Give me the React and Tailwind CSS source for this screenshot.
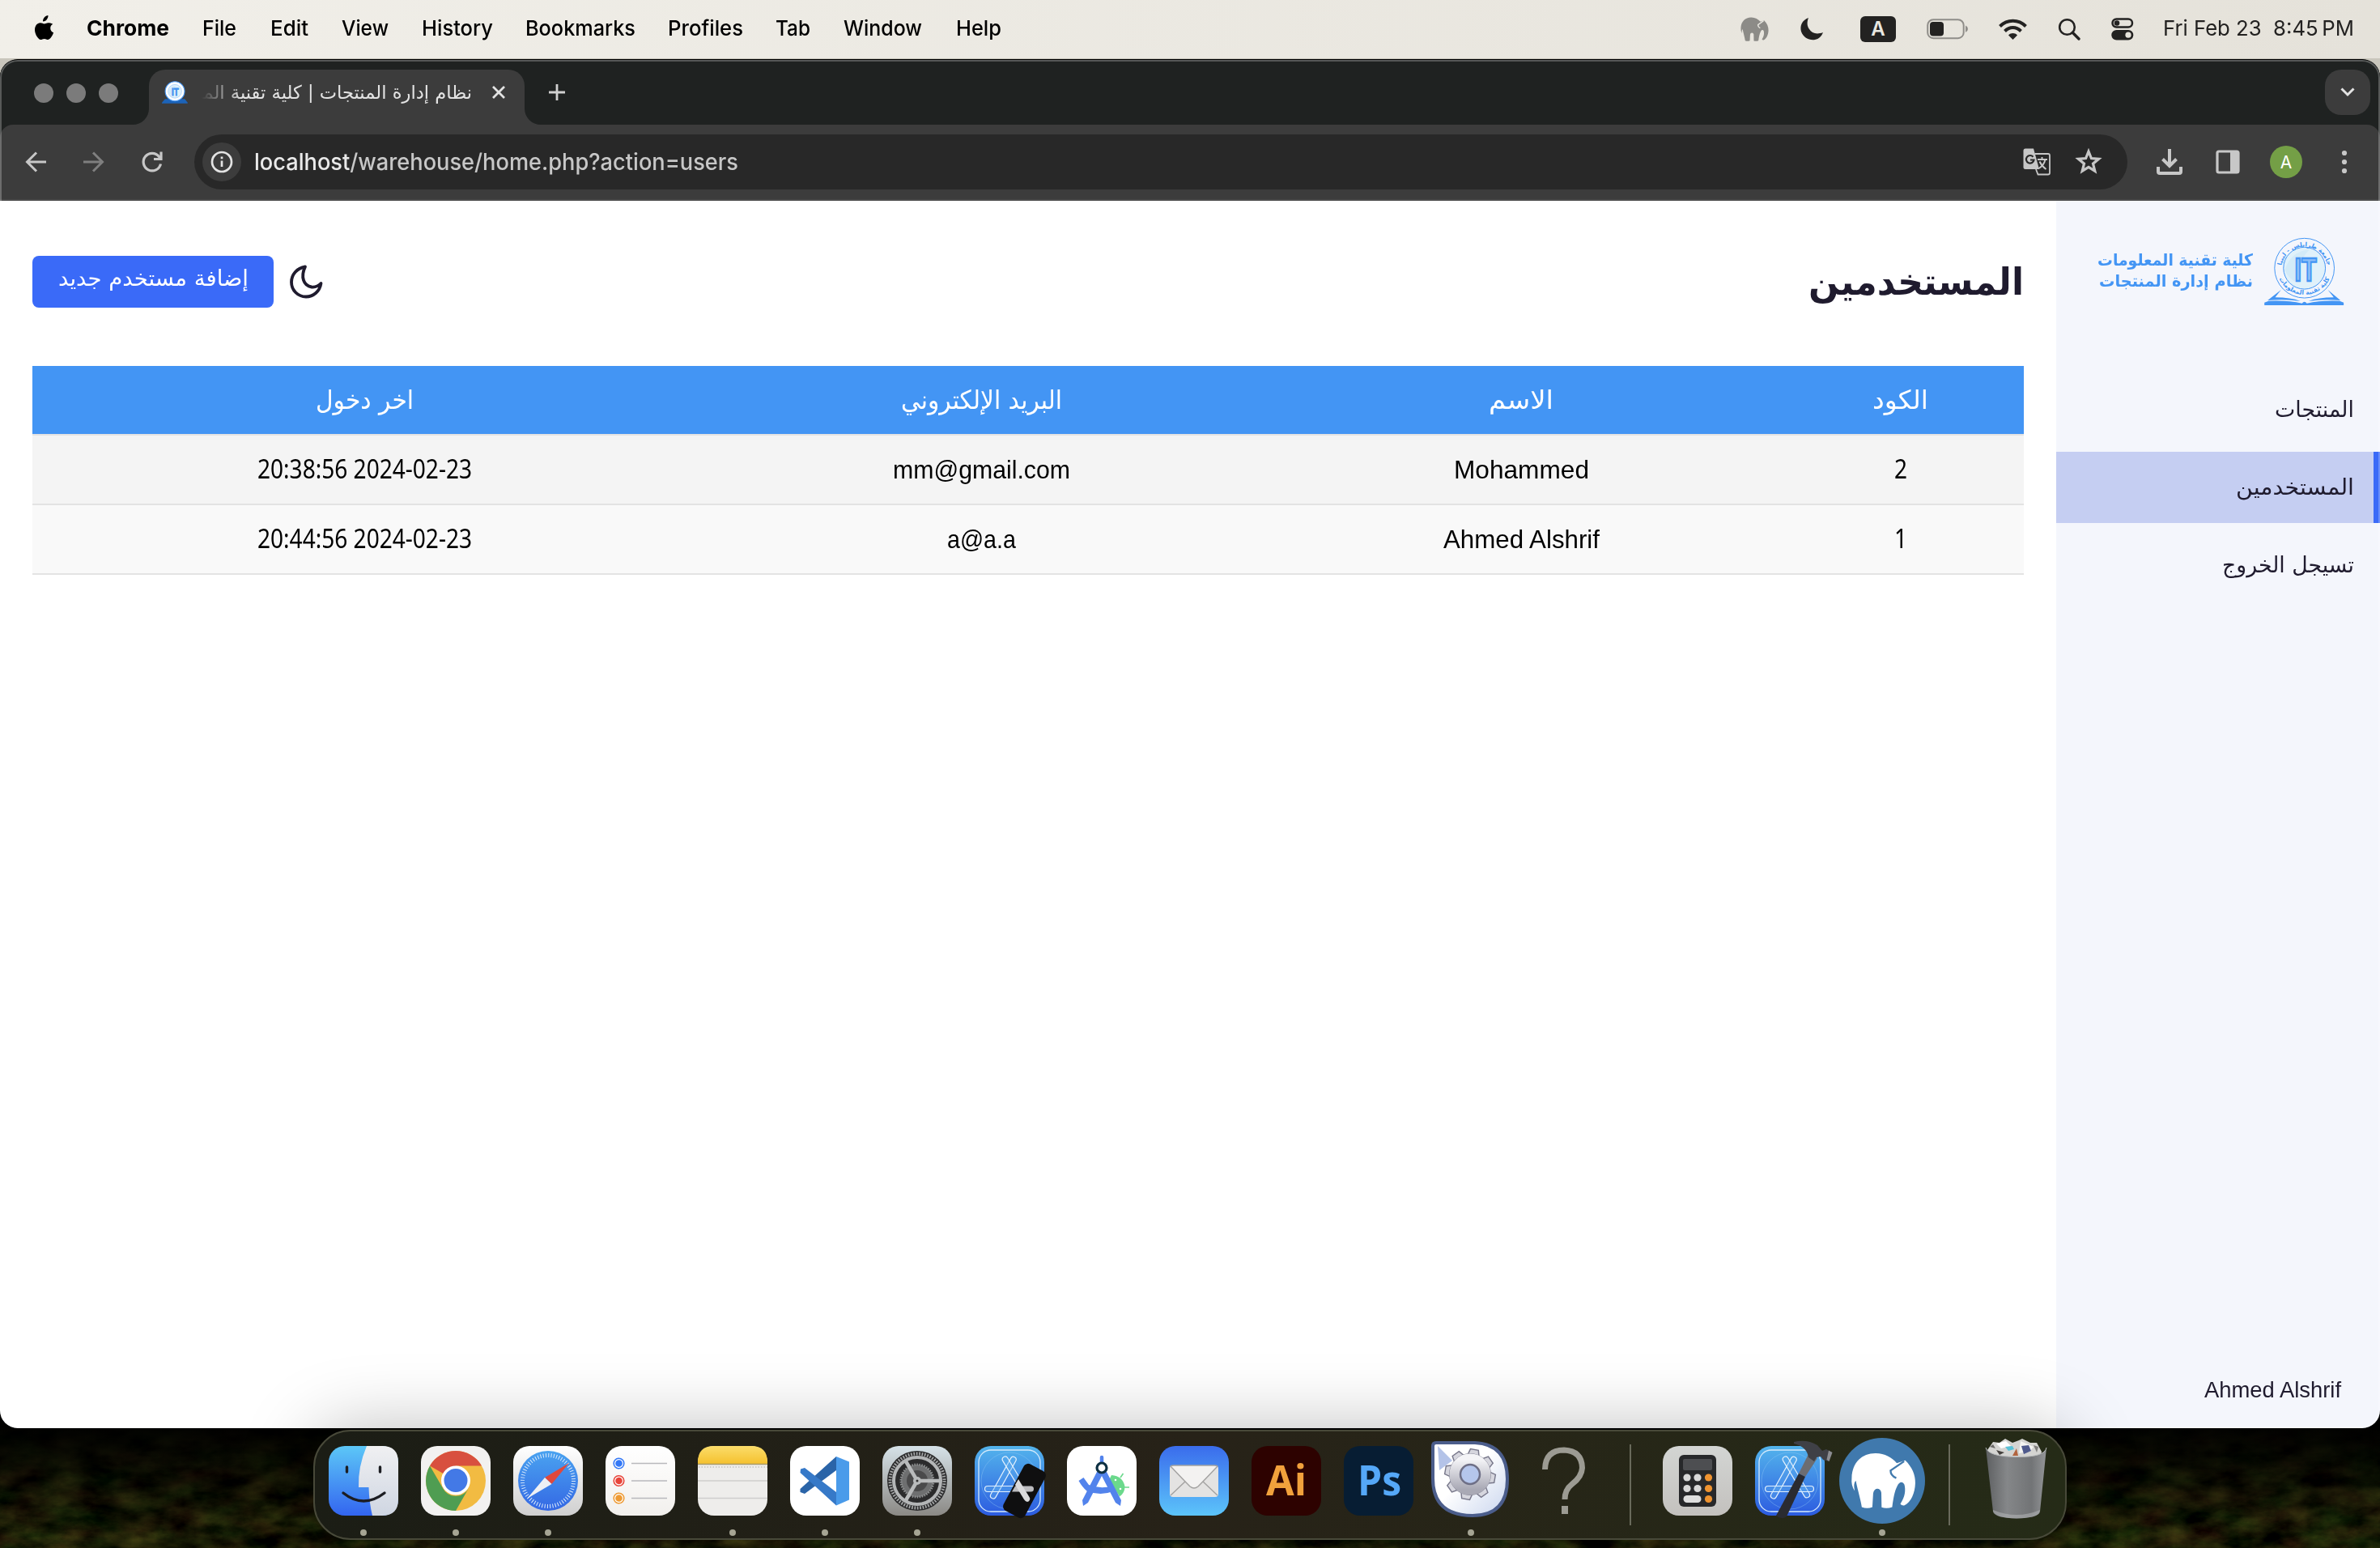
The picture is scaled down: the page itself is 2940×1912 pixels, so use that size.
import React, { useLayoutEffect, useRef } from "react";

/* Text condensed or widened to an exact width. */
function Fit({ w, rtl, className = "", children }) {
  const ref = useRef(null);
  useLayoutEffect(() => {
    const el = ref.current;
    el.style.transform = "none";
    const natural = el.getBoundingClientRect().width;
    if (natural > 0) el.style.transform = `scaleX(${w / natural})`;
  }, [w]);
  return (
    <span dir="ltr" className={"flex shrink-0 justify-start whitespace-pre " + className} style={{ width: w }}>
      <span ref={ref} dir={rtl ? "rtl" : "ltr"} className="block w-max shrink-0 origin-left">
        {children}
      </span>
    </span>
  );
}

const AR = "font-['DejaVu_Sans',sans-serif]";
const UI = "font-['Inter',sans-serif]";

const ELEPHANT =
  "M443 195C445 138 482 104 532 105C565 106 590 120 609 141L640 131C665 155 678 185 677 215C676 250 662 285 636 297Q626 298 622 291C640 265 642 240 637 220C631 207 618 208 611 225C600 245 596 275 592 303Q572 310 553 304L552 250C549 230 525 230 522 252L519 303Q500 310 480 303C476 275 466 245 458 205Q448 215 454 243Q440 225 443 195Z";

function CollegeLogo({ className, small }) {
  return (
    <svg className={className} viewBox="472 38 297 253" direction="ltr">
      {small ? (
        <path d="M472 291V283L508 240H734L767 283V291Z" fill="#1c63b8" />
      ) : (
        <g fill="#4395f4">
          <path d="M472 291V281L488 275Q560 272 612 284Q621 272 630 284Q682 272 752 275L767 281V291Z" />
          <path d="M484 273L534 234L512 262Q570 262 606 276Q550 267 484 273ZM755 273L708 234L730 262Q672 262 636 276Q692 267 755 273Z" />
        </g>
      )}
      <circle cx="621" cy="153" r="111" fill={small ? "#fff" : "#f4f6fc"} stroke="#4395f4" strokeWidth={small ? 10 : 3} />
      <circle cx="621" cy="153" r="78" fill="#e0f1fa" stroke="#4395f4" strokeWidth="3" />
      <path d="M548 160Q570 90 640 84Q600 120 590 205Q560 190 548 160Z" fill="#d3ebf8" />
      <defs>
        <path id="arcTop" d="M534 160A87 87 0 0 1 708 160" />
        <path id="arcBottom" d="M519 168A104 104 0 0 0 723 168" />
      </defs>
      {!small && (
        <g fill="#4395f4" className="font-['DejaVu_Sans',sans-serif] text-[23px] font-bold" textAnchor="middle">
          <text direction="rtl"><textPath href="#arcTop" startOffset="50%">جامعة طرابلس - ليبيا</textPath></text>
          <text direction="rtl"><textPath href="#arcBottom" startOffset="50%">كلية تقنية المعلومات</textPath></text>
        </g>
      )}
      <text x="584" y="202" direction="ltr" textLength="82" lengthAdjust="spacingAndGlyphs" className="font-['Liberation_Sans',sans-serif] text-[122px] font-bold" fill={small ? "#3f8fe8" : "#8fc0f8"} stroke="#4395f4" strokeWidth="7">IT</text>
    </svg>
  );
}

/* ------------------------------ Menu bar ------------------------------ */

const MENUS = [
  ["Chrome", 102], ["File", 42], ["Edit", 47], ["View", 58], ["History", 88],
  ["Bookmarks", 136], ["Profiles", 93], ["Tab", 43], ["Window", 97], ["Help", 56],
];

function MenuBar() {
  return (
    <header className={"flex h-[72px] shrink-0 items-center bg-linear-to-r from-[#f1efe9] to-[#e5e2da] text-[26px] leading-[72px] text-black " + UI}>
      <svg className="ml-[40px] h-[32px] w-[28px] -mt-0.5" viewBox="0 0 28 33" fill="#000">
        <path d="M19.6 0c.2 2-.6 3.900-1.800 5.300-1.200 1.400-3 2.500-4.800 2.300-.2-1.900.7-3.900 1.800-5.100C16 1.100 18 .1 19.600 0ZM25.600 11.200c-2 1.200-3.100 2.900-3.100 5.200 0 2.700 1.600 4.700 4 5.600-.6 1.900-1.500 3.700-2.700 5.400-1.200 1.700-2.500 3.500-4.400 3.500-1.900 0-2.400-1.100-4.600-1.100-2.200 0-2.900 1.100-4.600 1.200-1.900.1-3.300-1.900-4.500-3.600C3.200 23.900 1.300 17.600 3.900 13.200c1.200-2.200 3.500-3.600 5.900-3.600 1.900 0 3.600 1.200 4.800 1.200 1.100 0 3.300-1.500 5.500-1.300.9 0 3.600.4 5.500 1.700Z" />
      </svg>
      <nav className="ml-[39px] grid h-[70px] grid-cols-[143px_84px_88px_99px_128px_176px_133px_84px_139px_auto] leading-[67px] font-[450]">
        {MENUS.map(([label, w], i) => (
          <Fit key={label} w={w} className={i === 0 ? "font-bold" : ""}>{label}</Fit>
        ))}
      </nav>
      <div className="ml-auto flex items-center text-[#232221]">
        <svg className="h-[32px] w-[35px]" viewBox="440 100 240 210" fill="#8c8b87"><path d={ELEPHANT} /><path d="M636 134L588 168C588 182 595 190 607 196" stroke="#e9e7e0" strokeWidth="9" fill="none" /></svg>
        <svg className="ml-[38px] h-[30px] w-[30px]" viewBox="0 0 30 30" fill="#232221"><path d="M11 1C3 4 0 11 2 18C5 26 12 29 19 28C24 27 27 24 29 19C21 22 15 20 12 15C9 11 9 6 11 1Z" /></svg>
        <span className="ml-[45px] flex h-[32px] w-[44px] items-center justify-center rounded-[6px] bg-[#232221] text-[24px] leading-none font-semibold text-[#e9e7e0]">A</span>
        <svg className="ml-[38px] h-[26px] w-[52px]" viewBox="0 0 52 26"><rect x="1.200" y="1.200" width="44.500" height="23" rx="7" fill="none" stroke="#8f8d89" strokeWidth="2" /><rect x="4" y="4" width="17" height="17.500" rx="4" fill="#232221" /><path d="M48 8.500Q51 10 51 12.800T48 17Z" fill="#8f8d89" /></svg>
        <svg className="ml-[37px] h-[26px] w-[35px]" viewBox="0 0 35 26" fill="none" stroke="#232221" strokeWidth="4"><path d="M1.500 9.500C10.500 .5 24.500 .5 33.500 9.500" /><path d="M7.500 15.500C13.500 9.500 21.500 9.500 27.500 15.500" /><path d="M12 20.500C15.300 17.300 19.700 17.300 23 20.500L17.500 26Z" fill="#232221" stroke="none" /></svg>
        <svg className="ml-[38px] h-[28px] w-[28px]" viewBox="0 0 28 28" fill="none" stroke="#232221" strokeWidth="2.600"><circle cx="11.500" cy="11.500" r="9.300" /><path d="M18.300 18.300L26 26" strokeWidth="3.400" strokeLinecap="round" /></svg>
        <svg className="ml-[38px] h-[28px] w-[28px]" viewBox="0 0 28 28"><rect x="1.500" y="1.500" width="24.500" height="10" rx="5" fill="none" stroke="#232221" strokeWidth="2.500" /><circle cx="7" cy="6.500" r="3.300" fill="#232221" /><rect x=".3" y="15" width="27" height="12.500" rx="6.200" fill="#232221" /><circle cx="21" cy="21.200" r="3.600" fill="#e6e3db" /></svg>
        <Fit w={236} className="mr-[32px] ml-[36px] h-[70px] leading-[67px]">{"Fri Feb 23  8:45\u2009PM"}</Fit>
      </div>
    </header>
  );
}

/* ------------------------------ Browser ------------------------------ */

function TabStrip() {
  return (
    <div className="flex h-[80px] shrink-0 items-end bg-[#1f2221]">
      <div className="mb-[27px] ml-[42px] flex gap-4">
        <span className="size-6 rounded-full bg-[#7b7b7b]" />
        <span className="size-6 rounded-full bg-[#7b7b7b]" />
        <span className="size-6 rounded-full bg-[#7b7b7b]" />
      </div>
      <svg className="ml-[18px] size-5" viewBox="0 0 20 20" fill="#3c3c3c"><path d="M0 20A20 20 0 0 0 20 0V20Z" /></svg>
      <div className="flex h-[68px] w-[464px] items-center rounded-t-[20px] bg-[#3c3c3c] pb-3 pl-[16px]">
        <CollegeLogo small className="h-[32px] w-[32px]" />
        <div className={"ml-[17px] flex w-[334px] justify-end overflow-hidden text-[23px] leading-[54px] text-[#e3e3e3] mask-[linear-gradient(to_right,transparent,black_50px)] " + AR}>
          <Fit w={402} rtl>نظام إدارة المنتجات | كلية تقنية المعلومات</Fit>
        </div>
        <svg className="ml-[24px] size-[18px]" viewBox="0 0 18 18" stroke="#e3e3e3" strokeWidth="2.800"><path d="M2 2L16 16M16 2L2 16" /></svg>
      </div>
      <svg className="size-5" viewBox="0 0 20 20" fill="#3c3c3c"><path d="M20 20A20 20 0 0 1 0 0V20Z" /></svg>
      <svg className="mb-[29px] ml-[9px] size-[22px]" viewBox="0 0 22 22" stroke="#d0d0d0" strokeWidth="2.800"><path d="M11 1V21M1 11H21" /></svg>
      <div className="mr-3 mb-3 ml-auto flex size-[56px] items-center justify-center rounded-[20px] bg-[#3c3c3c]">
        <svg className="h-[12px] w-[18px]" viewBox="0 0 18 12" fill="none" stroke="#e3e3e3" strokeWidth="3"><path d="M1.500 1.500L9 9L16.500 1.500" /></svg>
      </div>
    </div>
  );
}

function Toolbar() {
  return (
    <div className="shrink-0 bg-[#1f2221]">
      <div className="flex h-[94px] items-center rounded-t-[16px] border-b-2 border-[#4a4a4a] bg-[#3c3c3c]">
        <svg className="ml-[29px] size-8" viewBox="0 0 32 32" fill="none" stroke="#c7c7c7" strokeWidth="3"><path d="M28 16H5M16 4.500L4.500 16L16 27.500" /></svg>
        <svg className="ml-[38px] size-8" viewBox="0 0 32 32" fill="none" stroke="#7f7f7f" strokeWidth="3"><path d="M4 16H27M16 4.500L27.500 16L16 27.500" /></svg>
        <svg className="ml-[41px] size-8" viewBox="0 0 32 32" fill="none" stroke="#c7c7c7" strokeWidth="3.200"><path d="M26.500 18.500A10.800 10.800 0 1 1 24.500 9.500L26 11.500" /><path d="M27 3.500V12.500H18" /></svg>
        <div className="ml-[36px] flex h-[68px] w-[2388px] items-center rounded-full bg-[#282828]">
          <span className="ml-[10px] flex size-12 items-center justify-center rounded-full bg-[#3c3c3c]">
            <svg className="size-7" viewBox="0 0 28 28" fill="none" stroke="#e3e3e3" strokeWidth="2.700"><circle cx="14" cy="14" r="12" /><path d="M14 12.500V20M14 7.500V10.200" /></svg>
          </span>
          <Fit w={598} className={"ml-[16px] text-[28px] leading-[68px] font-[450] text-[#c7c7c7] " + UI}>
            <span className="text-[#e9e9e9]">localhost</span>/warehouse/home.php?action=users
          </Fit>
          <svg className="ml-auto size-[34px]" viewBox="0 0 34 34">
            <path d="M3 .5H13L20 26H3Q.5 26 .5 23.500V3Q.5 .5 3 .5Z" fill="#c7c7c7" />
            <path d="M14.500 7H31Q33 7 33 9V30.500Q33 32.500 31 32.500H18.500L16 26" fill="none" stroke="#c7c7c7" strokeWidth="1.800" />
            <path d="M12.500 10.800A4.800 4.800 0 1 0 13.500 14.500H9" fill="none" stroke="#282828" strokeWidth="2.200" />
            <path d="M18 14H30M23.500 11V14M27.500 14Q26 21 19.500 25M20.500 16.500Q23 22 28.500 26" fill="none" stroke="#c7c7c7" strokeWidth="1.900" />
          </svg>
          <svg className="mr-[31px] ml-[30px] size-[34px]" viewBox="0 0 34 34" fill="none" stroke="#c7c7c7" strokeWidth="3.200"><path d="M17 4L20.400 12.600L29.600 13.300L22.500 19.200L24.800 28.200L17 23.300L9.200 28.200L11.500 19.200L4.400 13.300L13.600 12.600Z" /></svg>
        </div>
        <svg className="ml-[36px] size-8" viewBox="0 0 32 32" fill="none" stroke="#c7c7c7" strokeWidth="4"><path d="M16 0V20M7.500 12.500L16 21L24.500 12.500" /><path d="M2 22V28Q2 30 4 30H28Q30 30 30 28V22" /></svg>
        <svg className="ml-[41px] h-[30px] w-[30px]" viewBox="0 0 30 30"><rect x="2" y="2" width="26" height="26" rx="2" fill="none" stroke="#c7c7c7" strokeWidth="3.200" /><rect x="18" y="2" width="10" height="26" fill="#c7c7c7" /></svg>
        <span className={"ml-[37px] flex size-10 items-center justify-center rounded-full bg-[#749f46] text-[21px] leading-none text-white " + UI}>A</span>
        <svg className="ml-[36px] size-8" viewBox="0 0 32 32" fill="#c7c7c7"><circle cx="16" cy="5" r="3.100" /><circle cx="16" cy="16" r="3.100" /><circle cx="16" cy="27" r="3.100" /></svg>
      </div>
    </div>
  );
}

const USERS = [
  { id: "2", idW: 16, name: "Mohammed", nameW: 167, email: "mm@gmail.com", emailW: 219, at: "20:38:56 2024-02-23", row: "bg-[#f4f4f4]" },
  { id: "1", idW: 16, name: "Ahmed Alshrif", nameW: 193, email: "a@a.a", emailW: 85, at: "20:44:56 2024-02-23", row: "bg-[#f9f9f9]" },
];
const COLS = "grid grid-cols-[305px_632px_702px_821px] justify-items-center";

function UsersPage() {
  return (
    <main dir="rtl" className="flex-1 bg-white px-10 pt-[68px]">
      <div className="flex h-16 items-center justify-between">
        <h1><Fit w={266} rtl className={"text-[46px] leading-[66px] font-bold text-[#1f1b2e] " + AR}>المستخدمين</Fit></h1>
        <div className="flex items-center gap-[19px]">
          <svg className="size-[42px]" viewBox="0 0 42 42" fill="none" stroke="#1f1b2e" strokeWidth="3.800" strokeLinejoin="round"><path d="M20 2.500C10 4 3 12 3 21.500C3 31.500 11 39.500 21 39.500C30 39.500 38 33 39.500 23C36 26.500 32 28 28 27.500C18 26 14 15 20 2.500Z" /></svg>
          <button className="flex h-16 w-[298px] justify-center rounded-[8px] bg-[#3a6af8] text-white">
            <Fit w={235} rtl className={"text-[27px] leading-[56px] " + AR}>إضافة مستخدم جديد</Fit>
          </button>
        </div>
      </div>
      <section className="mt-[72px] text-[32px]">
        <div className={COLS + " h-[86px] border-b-2 border-[#e3e3e3] bg-[#4395f4] bg-clip-padding text-[32px] leading-[85px] text-white " + AR}>
          <Fit w={69} rtl>الكود</Fit>
          <Fit w={80} rtl>الاسم</Fit>
          <Fit w={199} rtl>البريد الإلكتروني</Fit>
          <Fit w={121} rtl>اخر دخول</Fit>
        </div>
        {USERS.map((u) => (
          <div key={u.id} className={COLS + " h-[86px] border-b-2 border-[#e3e3e3] leading-[84px] text-black font-['Liberation_Sans',sans-serif] " + u.row}>
            <Fit w={u.idW} className="font-['Noto_Sans',sans-serif] leading-[82px]">{u.id}</Fit>
            <Fit w={u.nameW}>{u.name}</Fit>
            <Fit w={u.emailW}>{u.email}</Fit>
            <Fit w={265} className="font-['Noto_Sans',sans-serif] leading-[82px]">{u.at}</Fit>
          </div>
        ))}
      </section>
    </main>
  );
}

function Sidebar() {
  return (
    <aside dir="rtl" className={"flex w-[400px] shrink-0 flex-col bg-[#f4f6fc] text-[27px] text-[#1f1b2e] " + AR}>
      <div className="flex h-[214px] items-start pt-[45px] pr-[44px]">
        <CollegeLogo className="h-[84px] w-[99px]" />
        <div className="mt-[15px] mr-[14px] text-[20px] leading-[26px] font-bold text-[#4395f4]">
          <Fit w={192} rtl>كلية تقنية المعلومات</Fit>
          <Fit w={190} rtl>نظام إدارة المنتجات</Fit>
        </div>
      </div>
      <nav className="flex flex-col gap-2 leading-[88px]">
        <a className="flex h-[88px] pr-[32px]"><Fit w={98} rtl>المنتجات</Fit></a>
        <a className="flex h-[88px] border-r-8 border-[#3a6af8] bg-[#c5cef2] pr-[24px]"><Fit w={146} rtl>المستخدمين</Fit></a>
        <a className="flex h-[88px] pr-[32px]"><Fit w={163} rtl>تسيجل الخروج</Fit></a>
      </nav>
      <div className="mt-auto mb-[27px] flex pr-[48px]">
        <Fit w={169} className="text-[28px] leading-10 font-['Liberation_Sans',sans-serif]">Ahmed Alshrif</Fit>
      </div>
    </aside>
  );
}

/* ------------------------------ Dock ------------------------------ */

const Tile = ({ fill, children }) => (
  <svg className="size-[86px] overflow-visible" viewBox="0 0 86 86">
    <rect width="86" height="86" rx="20" fill={fill} />
    {children}
  </svg>
);

function Gradients() {
  return (
    <svg className="absolute size-0">
      <defs>
        <linearGradient id="gFinder" x2="0" y2="1"><stop stopColor="#5cc7f7" /><stop offset="1" stopColor="#3365f0" /></linearGradient>
        <linearGradient id="gFace" x2="0" y2="1"><stop stopColor="#f0f0f2" /><stop offset="1" stopColor="#cfd6e2" /></linearGradient>
        <linearGradient id="gWhite" x2="0" y2="1"><stop stopColor="#ffffff" /><stop offset="1" stopColor="#f2f0ed" /></linearGradient>
        <linearGradient id="gSafari" x2="0" y2="1"><stop stopColor="#ffffff" /><stop offset="1" stopColor="#cfcfcf" /></linearGradient>
        <linearGradient id="gBlue" x2="0" y2="1"><stop stopColor="#4aa3f0" /><stop offset="1" stopColor="#3468e4" /></linearGradient>
        <linearGradient id="gNote" x2="0" y2="1"><stop stopColor="#fbdd6b" /><stop offset="1" stopColor="#f5c12e" /></linearGradient>
        <linearGradient id="gSettings" x2="0" y2="1"><stop stopColor="#d6e2e8" /><stop offset="1" stopColor="#8b8985" /></linearGradient>
        <linearGradient id="gXcode" x2="0" y2="1"><stop stopColor="#53b4ec" /><stop offset="1" stopColor="#2c5be0" /></linearGradient>
        <linearGradient id="gMail" x2="0" y2="1"><stop stopColor="#3a6cec" /><stop offset="1" stopColor="#5cc4fa" /></linearGradient>
        <linearGradient id="gCalc" x2="0" y2="1"><stop stopColor="#d3d5d3" /><stop offset="1" stopColor="#c3c1be" /></linearGradient>
        <linearGradient id="gBin"><stop stopColor="#5d5f61" /><stop offset=".35" stopColor="#858789" /><stop offset=".75" stopColor="#727476" /><stop offset="1" stopColor="#949698" /></linearGradient>
        <linearGradient id="gCog" x2="0" y2="1"><stop stopColor="#f4f4f7" /><stop offset="1" stopColor="#a9a9b5" /></linearGradient>
        <linearGradient id="gBlade" x2="1" y2="1"><stop stopColor="#fff" /><stop offset=".45" stopColor="#fff" /><stop offset="1" stopColor="#c9d5ee" /></linearGradient>
      </defs>
    </svg>
  );
}

const Finder = () => (
  <Tile fill="url(#gFinder)">
    <path d="M47 0H66Q86 0 86 20V66Q86 86 66 86H54Q50 70 49.500 51H37Q36 26 47 0Z" fill="url(#gFace)" />
    <g fill="none" stroke="#1c1d22" strokeWidth="3.400" strokeLinecap="round"><path d="M22.500 26V32M63.500 26V32M18 58Q43 78 69 58" /></g>
  </Tile>
);

const ChromeIcon = () => (
  <Tile fill="#f2f1f0">
    <circle cx="43" cy="43" r="37" fill="#f2bb42" />
    <path d="M43 43L11 24.500A37 37 0 0 1 75 24.500H43L27 52Z" fill="#d8503f" />
    <path d="M27 52L11 24.500A37 37 0 0 0 43 80L59 52A18 18 0 0 1 27 52Z" fill="#4f9d52" />
    <circle cx="43" cy="42.500" r="18" fill="#fff" /><circle cx="43" cy="42.500" r="14.500" fill="#4379e6" />
  </Tile>
);

const Safari = () => (
  <Tile fill="url(#gSafari)">
    <circle cx="43" cy="43" r="37" fill="url(#gBlue)" />
    <circle cx="43" cy="43" r="31.500" fill="none" stroke="#dcebfb" strokeWidth="5" strokeDasharray="1 2.300" />
    <path d="M69 21L47.500 47L39 39Z" fill="#e0483c" /><path d="M17 65L39 39L47.500 47Z" fill="#eef1f5" />
  </Tile>
);

const Reminders = () => (
  <Tile fill="url(#gWhite)">
    {[["#3478f6", 21.500], ["#e8453a", 43], ["#ee9a33", 64.500]].map(([c, y]) => (
      <g key={c}><circle cx="16.500" cy={y} r="6.300" fill="#fff" stroke={c} strokeWidth="1.600" /><circle cx="16.500" cy={y} r="4.300" fill={c} /><path d={`M32 ${y}H76`} stroke="#b9b9bd" strokeWidth="1.500" /></g>
    ))}
  </Tile>
);

const Notes = () => (
  <Tile fill="#eeedeb">
    <path d="M0 22V20Q0 0 20 0H66Q86 0 86 20V22Z" fill="url(#gNote)" />
    <path d="M0 22.500H86" stroke="#a99a69" strokeWidth="1.400" /><path d="M1 26H86" stroke="#c4c2bf" strokeWidth="1.500" strokeDasharray="1.500 2" />
    <path d="M0 43H86M0 64.500H86" stroke="#cfcecd" strokeWidth="1.400" />
  </Tile>
);

const VsCode = () => (
  <Tile fill="#fff">
    <path d="M57 13L12.500 53V57L18 59L57 30Z" fill="#2a64a8" />
    <path d="M13 28.500L18 27L57 57V73.500L12.500 33Z" fill="#3679c8" />
    <path d="M57 13L73 19.500V66.500L57 73.500Z" fill="#4a9bea" />
  </Tile>
);

const Settings = () => (
  <Tile fill="url(#gSettings)">
    <circle cx="43" cy="43" r="37" fill="#2b2b2c" />
    <circle cx="43" cy="43" r="33.500" fill="none" stroke="#a5a7a8" strokeWidth="4" strokeDasharray="1.700 1.700" />
    <circle cx="43" cy="43" r="29" fill="none" stroke="#b4b6b7" strokeWidth="4" />
    <circle cx="43" cy="43" r="20" fill="#6e6f70" stroke="#8e9091" strokeWidth="3" strokeDasharray="1.500 1.500" />
    <circle cx="43" cy="43" r="13" fill="#4a4a4b" />
    <path d="M43 43H71M43 43L29 19M43 43L29 67" stroke="#b9bbbc" strokeWidth="4.500" /><circle cx="43" cy="43" r="5" fill="#b9bbbc" /><circle cx="43" cy="43" r="1.500" fill="#333" />
  </Tile>
);

const XcodeBase = () => (
  <>
    <rect x="5" y="5" width="76" height="76" rx="15" fill="none" stroke="#d5eafb" strokeWidth="1.300" />
    <circle cx="43" cy="43" r="35" fill="none" stroke="#8fc8f3" strokeWidth=".7" opacity=".6" />
    <g fill="#62aef0" fillOpacity=".35" stroke="#e3f1fd" strokeWidth="1.200">
      <rect x="44" y="13" width="7" height="58" rx="3.500" transform="rotate(29 47 17)" />
      <rect x="34.500" y="13" width="7" height="58" rx="3.500" transform="rotate(-31 38 17)" />
      <rect x="12.500" y="49.500" width="60" height="7" rx="3.500" />
    </g>
  </>
);

const Simulator = () => (
  <Tile fill="url(#gXcode)">
    <XcodeBase />
    <rect x="46.500" y="23" width="30" height="65" rx="6" fill="#0f0f10" transform="rotate(28 61.500 55.500)" />
    <path d="M50 49.500H69.500A3.500 3.500 0 0 1 69.500 56.500H46Z" fill="#bcbcc0" />
    <path d="M54 41L50 48L61 66Q63.500 70 66.500 68.500Q69.500 66.500 67.500 63Z" fill="#dadadc" />
  </Tile>
);

const Xcode = () => (
  <Tile fill="url(#gXcode)">
    <XcodeBase />
    <path d="M66 10L77 15L62 38L54 34Z" fill="#6c6d72" />
    <path d="M54 34L62 38L39 87Q33 92 26 86Z" fill="#2a2b31" />
    <path d="M48-5Q64-9 77-1L83 6L88 4L95 8L91 19L84 17L81 13L76 14L73 19L66 14Q64 1 48-3Z" fill="#3f4046" />
    <path d="M91 5.500L95.500 8L91.500 19L88.500 17Z" fill="#8c8d92" />
  </Tile>
);

const Studio = () => (
  <Tile fill="#fff">
    <path d="M55 36Q69 37 71.500 50Q71.500 58 65 62.500L52 42Z" fill="#6bd98c" /><path d="M66 39L69.500 34M71 51H77" stroke="#6bd98c" strokeWidth="1.600" /><circle cx="60" cy="42" r="1.300" fill="#fff" /><circle cx="66" cy="53" r="1.300" fill="#fff" />
    <path d="M43 14V24" stroke="#5283ec" strokeWidth="4.500" strokeLinecap="round" />
    <path d="M37 32H49L67 67L66 74L60 70L43 37L26 70L20 74L19 67Z" fill="#5283ec" />
    <path d="M14.500 43L20.500 39L27 48Q42 54 57 49V56Q42 62 25 56Q19 51 14.500 43Z" fill="#5283ec" />
    <circle cx="43" cy="27" r="6" fill="#fff" stroke="#0d3042" strokeWidth="3.200" />
  </Tile>
);

const Mail = () => (
  <Tile fill="url(#gMail)">
    <rect x="13" y="24" width="60" height="39" rx="4" fill="#e4e3e2" />
    <path d="M14 61L33 43M72 61L53 43" stroke="#a3a2a1" strokeWidth="1.400" />
    <path d="M14 25Q30 42 38 50Q43 54 48 50Q56 42 72 25Q71 24 68 24H18Q15 24 14 25Z" fill="#f3f2f1" stroke="#a3a2a1" strokeWidth="1.400" />
  </Tile>
);

const Adobe = ({ bg, fg, label, x, w }) => (
  <Tile fill={bg}>
    <text x={x} y="60.500" textLength={w} lengthAdjust="spacingAndGlyphs" fill={fg} className="font-['Open_Sans',sans-serif] text-[52px] font-bold">{label}</text>
  </Tile>
);

const Gear = ({ cx, cy, r }) => (
  <g>
    {[0, 45, 90, 135, 180, 225, 270, 315].map((a) => (
      <path key={a} d={`M${cx - 8} ${cy - r + 5}L${cx - 5} ${cy - r - 6}H${cx + 5}L${cx + 8} ${cy - r + 5}Z`} transform={`rotate(${a + 10} ${cx} ${cy})`} fill="#d6d6de" stroke="#77778a" strokeWidth="1.400" />
    ))}
    <circle cx={cx} cy={cy} r={r + .5} fill="none" stroke="#8a8a9a" strokeWidth="1" />
    <circle cx={cx} cy={cy} r={r - 6.500} fill="none" stroke="url(#gCog)" strokeWidth="14" />
    <circle cx={cx} cy={cy} r={r - 13} fill="#b5c6ec" stroke="#6e6f86" strokeWidth="2.500" />
  </g>
);

const Automation = () => (
  <svg className="size-[86px] overflow-visible" viewBox="0 0 86 86">
    <path d="M0-4H48Q88-2 88 41Q88 86 45 86Q-4 86-4 40V0Q-4-4 0-4Z" fill="url(#gBlade)" stroke="#4b5d8b" strokeWidth="4" />
    <path d="M2 0L20 18L4 30Z" fill="#b4c3e8" />
    <Gear cx={42} cy={35} r={25} />
  </svg>
);

const Question = () => (
  <svg className="size-[86px]" viewBox="0 0 86 86" fill="none" stroke="#9c9b93" strokeWidth="7"><path d="M20.500 29Q21 5 44 5Q66 6 66.500 27Q66 38 54 47Q45 54 45 66" /><path d="M45 74V84" strokeWidth="8" /></svg>
);

const Calculator = () => (
  <Tile fill="url(#gCalc)">
    <rect x="20" y="11" width="46" height="64" rx="6" fill="#27282a" /><rect x="25" y="16" width="36" height="14" rx="2" fill="#4d4e51" />
    {[39, 52.500, 65.500].map((y) => (
      <g key={y}>
        {y < 60 ? <><circle cx="30" cy={y} r="4.600" fill="#d8d8d8" /><circle cx="43" cy={y} r="4.600" fill="#d8d8d8" /></> : <rect x="25.500" y={y - 4.500} width="22" height="9" rx="4.500" fill="#dedede" />}
        <circle cx="56.500" cy={y} r="4.600" fill="#ef9330" />
      </g>
    ))}
  </Tile>
);

const Mamp = () => (
  <svg className="-mx-[10px] size-[106px] shrink-0" viewBox="397 48 316 316">
    <circle cx="555" cy="206" r="158" fill="#4079ad" /><path d={ELEPHANT} fill="#fff" /><path d="M636 134L586 168C586 182 593 190 607 196" stroke="#4079ad" strokeWidth="7" fill="none" />
  </svg>
);

const Trash = () => (
  <svg className="-mt-1 h-[100px] w-[86px]" viewBox="0 0 86 100">
    <path d="M7 14L14 4L22 5L29 0L38 5L46 2L50 0L60 5L68 5L74 16L72 24H12Z" fill="#d4d4d1" />
    <path d="M18 6L30 3L36 9L24 12Z" fill="#fff" /><path d="M48 3L64 10L60 15L46 18Z" fill="#f4f4f2" /><path d="M49 9L58 8L61 15L52 19Z" fill="#4f5a8c" /><path d="M29 10L38 9L40 13L33 15Z" fill="#59c1d6" /><path d="M43 12L45 21H38Z" fill="#b2643f" /><path d="M18 14L28 17L22 20Z" fill="#44403d" /><path d="M10 10L14 7L17 12Z" fill="#6c6b69" /><path d="M64 8L70 10L68 17Z" fill="#7f7e7c" />
    <path d="M5 11Q8 22 43 22.500T80 11L72 90Q70 98 43 98.500Q16 98 14 90Z" fill="url(#gBin)" />
    <path d="M14 88Q43 100 72 88L71 92Q66 98 43 98.500Q18 98 14 90Z" fill="#b9bbbd" opacity=".5" />
    <path d="M5 11Q8 22 43 22.500T80 11" fill="none" stroke="#b6b8ba" strokeWidth="1" />
  </svg>
);

const Divider = () => <span className="mx-[11px] h-[100px] w-0.5 shrink-0 bg-[#696a5b]" />;

function DockItem({ open, children }) {
  return (
    <div className="flex w-[86px] shrink-0 flex-col items-center">
      <div className="flex h-[122px] items-center">{children}</div>
      <span className={"-mt-px h-2 w-2 shrink-0 rounded-full " + (open ? "bg-[#a6a594]" : "bg-transparent")} />
    </div>
  );
}

function Dock() {
  return (
    <div className="relative mx-auto mt-0.5 flex h-[136px] w-[2166px] items-start gap-7 rounded-[46px] border-2 border-[#484939] bg-linear-to-r from-[#1b1d15] via-[#272218] to-[#252b17] px-[17px] shadow-[0_0_90px_rgba(0,0,0,0.27)]">
      <DockItem open><Finder /></DockItem>
      <DockItem open><ChromeIcon /></DockItem>
      <DockItem open><Safari /></DockItem>
      <DockItem><Reminders /></DockItem>
      <DockItem open><Notes /></DockItem>
      <DockItem open><VsCode /></DockItem>
      <DockItem open><Settings /></DockItem>
      <DockItem><Simulator /></DockItem>
      <DockItem><Studio /></DockItem>
      <DockItem><Mail /></DockItem>
      <DockItem><Adobe bg="#2d0200" fg="#f1a13c" label="Ai" x={18} w={50} /></DockItem>
      <DockItem><Adobe bg="#071d33" fg="#55a8f8" label="Ps" x={17} w={54} /></DockItem>
      <DockItem open><Automation /></DockItem>
      <DockItem><Question /></DockItem>
      <div className="flex h-[132px] items-center"><Divider /></div>
      <DockItem><Calculator /></DockItem>
      <DockItem><Xcode /></DockItem>
      <DockItem open><Mamp /></DockItem>
      <div className="flex h-[132px] items-center"><Divider /></div>
      <DockItem><Trash /></DockItem>
    </div>
  );
}

function Wallpaper() {
  return (
    <svg className="absolute bottom-0 left-0 h-[200px] w-[2940px]" viewBox="0 0 2940 200">
      <defs>
        <filter id="foliage" x="0" y="0" width="100%" height="100%" colorInterpolationFilters="sRGB">
          <feTurbulence type="fractalNoise" baseFrequency="0.02 0.04" numOctaves="5" seed="11" />
          <feColorMatrix values="0.35 0.25 0 0 -0.2  0.22 0.35 0 0 -0.18  0.1 0.1 0 0 -0.08  0 0 0 0 1" />
        </filter>
        <linearGradient id="shade" x2="0" y2="1"><stop offset=".25" stopColor="#000" stopOpacity=".95" /><stop offset=".75" stopColor="#000" stopOpacity=".25" /><stop offset="1" stopColor="#000" stopOpacity="0" /></linearGradient>
      </defs>
      <rect width="2940" height="200" fill="#0c0f06" />
      <rect width="2940" height="200" filter="url(#foliage)" />
      <rect width="2940" height="200" fill="url(#shade)" />
    </svg>
  );
}

export default function App() {
  return (
    <div className="relative flex h-[1912px] w-[2940px] flex-col overflow-hidden bg-[#c9c6bc]">
      <Wallpaper />
      <Gradients />
      <MenuBar />
      <div className="relative mt-px flex h-[1691px] shrink-0 flex-col overflow-hidden rounded-[22px] border-t border-black bg-[#1f2221]">
        <TabStrip />
        <Toolbar />
        <div className="flex flex-1">
          <UsersPage />
          <Sidebar />
        </div>
        <div className="pointer-events-none absolute inset-0 rounded-[22px] border-2 border-white/25" />
      </div>
      <Dock />
    </div>
  );
}
